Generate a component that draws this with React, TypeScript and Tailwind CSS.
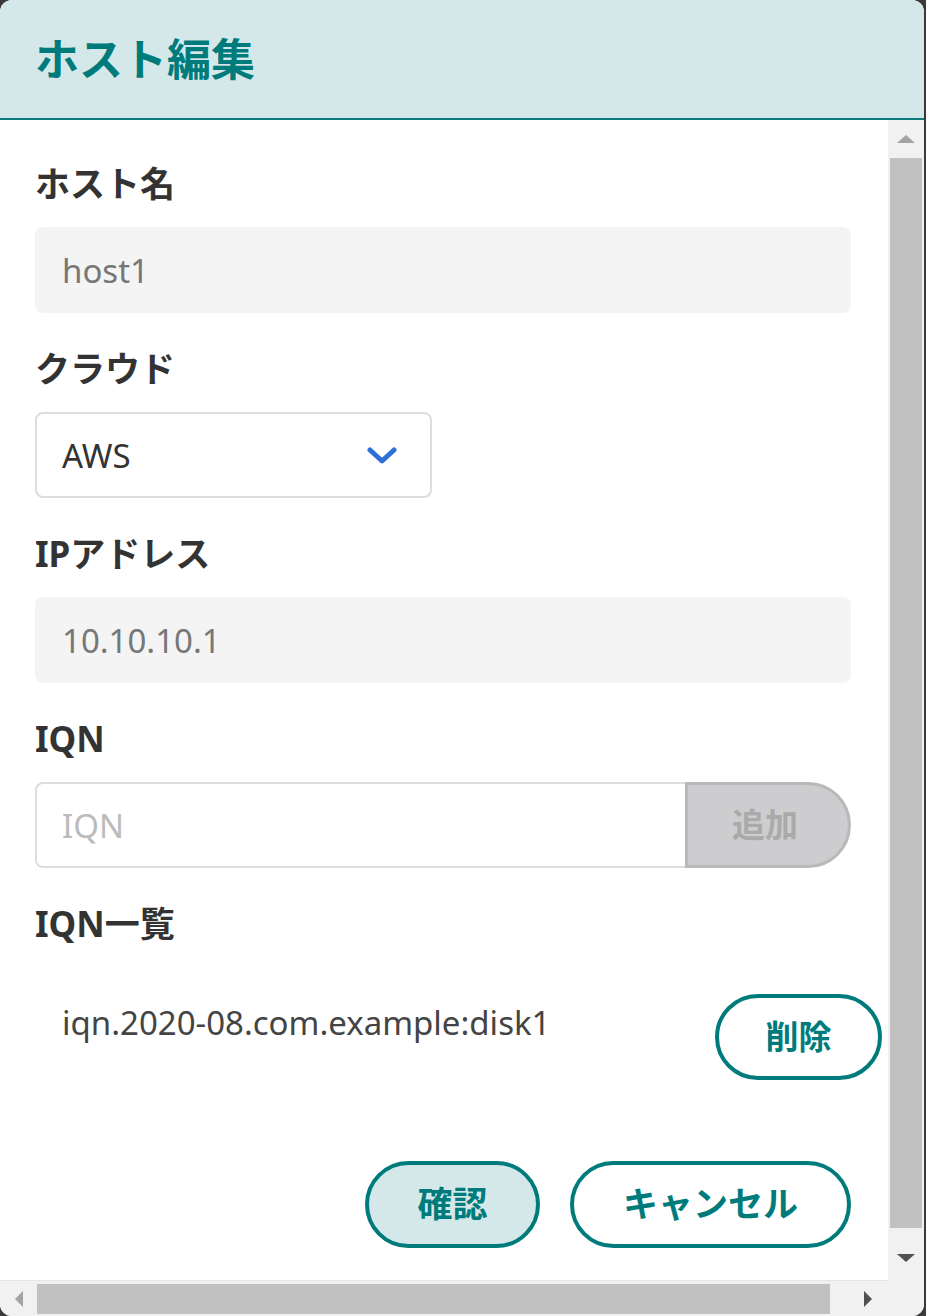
const font = { fontFamily: '"Noto Sans", "Noto Sans CJK JP", sans-serif' }

function Label({ children }: { children: React.ReactNode }) {
  return <div className="h-[44px] text-[35px] leading-[44px] font-bold text-[#333333]">{children}</div>
}

function ReadonlyInput({ value }: { value: string }) {
  return (
    <div className="mt-[21px] flex h-[86px] items-center rounded-[8px] bg-[#f4f4f4] px-[27px] pt-[2px] text-[33px] text-[#777777]">
      {value}
    </div>
  )
}

export default function App() {
  return (
    <div className="h-[1316px] w-[926px] bg-[#3a3a3a]" style={font}>
      <div className="flex h-full w-[924px] flex-col overflow-hidden rounded-[12px] bg-white">
        {/* Header */}
        <div className="flex h-[120px] shrink-0 items-center border-b-2 border-[#0b7c7d] bg-[#d4e8ea] px-[35px]">
          <h1 className="text-[44px] font-bold text-[#007b7b]">ホスト編集</h1>
        </div>

        <div className="flex min-h-0 flex-1">
          {/* Scrollable body */}
          <div className="flex w-[888px] flex-col">
            <div className="h-[1160px] overflow-hidden pl-[35px] pr-[37px] pt-[42px]">
              <Label>ホスト名</Label>
              <ReadonlyInput value="host1" />

              <div className="mt-[34px]">
                <Label>クラウド</Label>
                <div className="mt-[21px] flex h-[86px] w-[397px] items-center justify-between rounded-[8px] border-2 border-[#dddddd] pl-[25px] pr-[33px] text-[33px] text-[#333333]">
                  <span className="pt-[2px]">AWS</span>
                  <svg width="30" height="18" viewBox="0 0 30 18" fill="none" className="mt-[2px]">
                    <path d="M3 3l12 11L27 3" stroke="#2f6fd8" strokeWidth="5" strokeLinecap="round" strokeLinejoin="round" />
                  </svg>
                </div>
              </div>

              <div className="mt-[34px]">
                <Label>IPアドレス</Label>
                <ReadonlyInput value="10.10.10.1" />
              </div>

              <div className="mt-[34px]">
                <Label>IQN</Label>
                <div className="mt-[21px] flex h-[86px]">
                  <div className="flex flex-1 items-center rounded-l-[8px] border-2 border-r-0 border-[#dddddd] px-[25px] pt-[2px] text-[33px] text-[#bbbbbb]">
                    IQN
                  </div>
                  <button className="w-[166px] rounded-r-full border-[3px] border-[#b9b9b9] bg-[#cdcdd0] pr-[6px] text-[33px] font-bold text-[#aaaaaa]">
                    追加
                  </button>
                </div>
              </div>

              <div className="mt-[34px]">
                <Label>IQN一覧</Label>
                <div className="mt-[48px] mr-[-31px] flex items-start justify-between">
                  <span className="mt-[7px] pl-[27px] text-[33px] leading-[44px] text-[#444444]">
                    iqn.2020-08.com.example:disk1
                  </span>
                  <button className="h-[86px] w-[167px] rounded-full border-[4px] border-[#007b7b] bg-white text-[33px] font-bold text-[#007b7b]">
                    削除
                  </button>
                </div>
              </div>

              <div className="mt-[81px] flex justify-end gap-[30px]">
                <button className="h-[87px] w-[175px] rounded-full border-[4px] border-[#007b7b] bg-[#d4e8ea] text-[35px] font-bold text-[#007b7b]">
                  確認
                </button>
                <button className="h-[87px] w-[281px] rounded-full border-[4px] border-[#007b7b] bg-white text-[35px] font-bold text-[#007b7b]">
                  キャンセル
                </button>
              </div>
            </div>

            {/* Horizontal scrollbar */}
            <div className="flex h-[36px] shrink-0 items-center border-t border-[#e4e4e4] bg-[#f1f1f1]">
              <div className="flex w-[37px] justify-center">
                <div className="h-0 w-0 border-y-[8px] border-r-[8px] border-y-transparent border-r-[#a3a3a3]" />
              </div>
              <div className="h-[30px] w-[793px] bg-[#c1c1c1]" />
              <div className="flex-1" />
              <div className="flex w-[40px] justify-center">
                <div className="h-0 w-0 border-y-[8px] border-l-[8px] border-y-transparent border-l-[#505050]" />
              </div>
            </div>
          </div>

          {/* Vertical scrollbar */}
          <div className="flex w-[36px] flex-col bg-[#f1f1f1]">
            <div className="flex h-[38px] items-center justify-center">
              <div className="h-0 w-0 border-x-[9px] border-b-[8px] border-x-transparent border-b-[#a3a3a3]" />
            </div>
            <div className="mx-auto h-[1070px] w-[32px] bg-[#c1c1c1]" />
            <div className="flex-1" />
            <div className="flex h-[44px] items-center justify-center">
              <div className="h-0 w-0 border-x-[9px] border-t-[8px] border-x-transparent border-t-[#505050]" />
            </div>
            <div className="h-[36px]" />
          </div>
        </div>
      </div>
    </div>
  )
}
